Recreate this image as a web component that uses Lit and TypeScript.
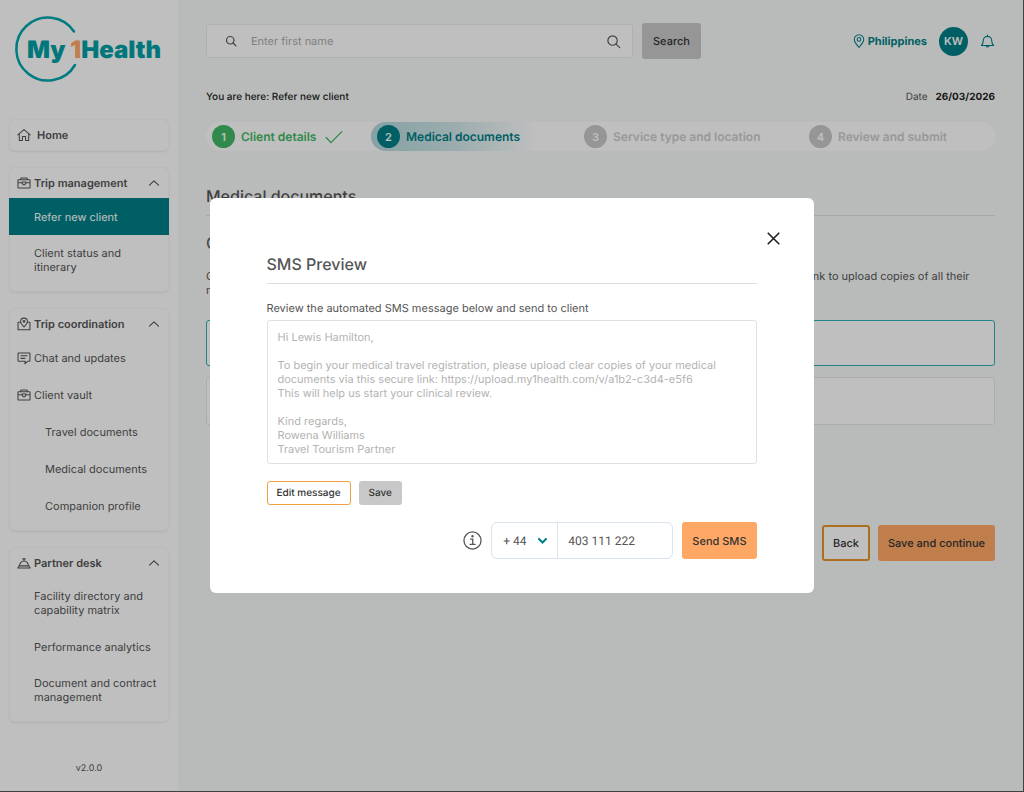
import { LitElement, html, css, svg, nothing } from "lit";
import { customElement, property, state } from "lit/decorators.js";
import { classMap } from "lit/directives/class-map.js";

const icons: Record<string, unknown> = {
  home: svg`<path d="M1 7.800 8 1.800l7 6M2.600 6.800v7.400h3.600V9.600h3.600v4.600h3.600V6.800"/>`,
  bag: svg`<path d="M4 4.200 4.600 2.300h6.800L12 4.200M1.800 4.200h12.400a.7.7 0 0 1 .7.700v8.200a.7.7 0 0 1-.7.700H1.800a.7.7 0 0 1-.7-.700V4.900a.7.7 0 0 1 .7-.700ZM1.300 7.600h4.500M10.200 7.600h4.500M5.800 6.900h4.400v1.300L9 9.900H7L5.800 8.200Z"/>`,
  map: svg`<path d="M3.800 6H1.200v8.600h13.600V6h-2.600M8 11.400C5.800 9.200 4.100 7.400 4.100 5.200a3.900 3.900 0 0 1 7.800 0c0 2.200-1.700 4-3.900 6.200Z"/><circle cx="8" cy="5" r="1"/>`,
  chat: svg`<path d="M1.800 2.200h12.400a.6.6 0 0 1 .6.6v8.200a.6.6 0 0 1-.6.600h-1.800L9 14.600l.4-3H1.800a.6.6 0 0 1-.6-.600V2.800A.6.6 0 0 1 1.800 2.200ZM4.500 5.400h7M4.500 8.400h4.500"/>`,
  bell: svg`<path d="M2.200 11.300h11.600l1.200 2.400H1ZM3 11.300a5 5.700 0 0 1 10 0M6.600 3.300h2.800M8 3.500v2"/>`,
  search: svg`<circle cx="7" cy="7" r="5"/><path d="m10.700 10.700 3.900 3.900"/>`,
  pin: svg`<path d="M8 15.200C5 11.800 2.600 9.400 2.600 6.300a5.400 5.400 0 0 1 10.800 0c0 3.100-2.400 5.500-5.400 8.900Z"/><circle cx="8" cy="6.200" r="2.100"/>`,
  alert: svg`<path d="M1.500 12.200c1.400-1.300 2-2.400 2-5.200a4.500 4.500 0 0 1 9 0c0 2.800.6 3.900 2 5.200ZM8 2.500V1.200M6.300 12.500a1.750 1.750 0 0 0 3.400 0"/>`,
  up: svg`<path d="m2 10.800 6-5.600 6 5.600"/>`,
  check: svg`<path d="m1 8.500 4.300 4.500L15 3.200"/>`,
  close: svg`<path d="m1.500 1.500 13 13M14.500 1.500l-13 13"/>`,
  info: svg`<circle cx="8" cy="8" r="7.200"/><path d="M6.300 6.800h1.900v4.400M6 11.300h4.200"/><circle cx="8" cy="4.500" r=".5" fill="currentColor"/>`,
};

const sharedStyles = css`
  *, *::before, *::after { box-sizing: border-box; }
  :host { font-family: Inter, "Liberation Sans", sans-serif; font-size: 11px; line-height: 14px; text-rendering: geometricPrecision; }
  h1, h2, h3, p, ul { margin: 0; padding: 0; font-weight: 400; list-style: none; }
  button, input, select, textarea { font: inherit; color: inherit; margin: 0; outline: none; text-rendering: inherit; }
  a { color: inherit; text-decoration: none; }
  button { cursor: pointer; }
`;

@customElement("ui-icon")
export class UiIcon extends LitElement {
  @property() name = "";
  @property({ type: Number }) size = 14;
  @property({ type: Number }) stroke = 1.2;
  static styles = css`
    :host { display: inline-flex; flex: none; }
    .icon { display: block; fill: none; stroke: currentColor; stroke-linecap: round; stroke-linejoin: round; }
  `;
  render() {
    return html`<svg class="icon" width=${this.size} height=${this.size} viewBox="0 0 16 16"
      stroke-width=${this.stroke} aria-hidden="true">${icons[this.name]}</svg>`;
  }
}

interface NavItem { label: string; icon?: string; active?: boolean; nested?: boolean; }
interface NavGroup { label: string; icon: string; items: NavItem[]; }

const groups: NavGroup[] = [
  { label: "Trip management", icon: "bag", items: [
    { label: "Refer new client", active: true },
    { label: "Client status and itinerary" },
  ] },
  { label: "Trip coordination", icon: "map", items: [
    { label: "Chat and updates", icon: "chat" },
    { label: "Client vault", icon: "bag" },
    { label: "Travel documents", nested: true },
    { label: "Medical documents", nested: true },
    { label: "Companion profile", nested: true },
  ] },
  { label: "Partner desk", icon: "bell", items: [
    { label: "Facility directory and capability matrix" },
    { label: "Performance analytics" },
    { label: "Document and contract management" },
  ] },
];

@customElement("side-nav")
export class SideNav extends LitElement {
  static styles = [sharedStyles, css`
    :host { display: flex; flex-direction: column; width: 178px; flex: none; background: #fff; color: #555; padding: 14px 9px 0; }
    .logo { display: block; width: 150px; height: 70px; margin: 0 0 35px 5px; overflow: visible; }
    .ring { fill: none; stroke: #00a5aa; stroke-width: 2.500; stroke-linecap: round; }
    .word { font-family: Inter, sans-serif; font-size: 24px; font-weight: 900; fill: #00a0a5; }
    .one { fill: #ffa866; }
    .menu { display: flex; flex-direction: column; gap: 16px; }
    .card { border: 1px solid #f8f8f8; border-radius: 6px; box-shadow: 0 1px 2px rgba(0, 0, 0, 0.08); padding-bottom: 6px; }
    .home { padding: 0; }
    .head { display: flex; align-items: center; gap: 3px; width: 100%; height: 30px; padding: 0 8px 0 7px; border: 0; background: none; text-align: left; font-weight: 600; }
    .home .head { gap: 6px; }
    .grow { flex: 1; }
    .item { display: flex; align-items: center; gap: 3px; min-height: 37px; padding: 11px 6px 11px 24px; }
    .icon { padding-left: 7px; }
    .nested { padding-left: 35px; }
    .active { background: #007f86; color: #fff; margin: 0 -1px; padding-left: 25px; }
    .version { margin: 40px 0 0; text-align: center; font-size: 9px; }
  `];
  render() {
    return html`
      <svg class="logo" viewBox="0 0 150 70" role="img" aria-label="My 1Health">
        <path class="ring" d="M60 17.500A31.500 31.500 0 1 0 61 51"/>
        <text class="word" x="13" y="44">My <tspan class="one">1</tspan>Health</text>
      </svg>
      <nav class="menu">
        <div class="card home"><a class="head" href="#"><ui-icon name="home"></ui-icon>Home</a></div>
        ${groups.map((g) => html`
          <section class="card">
            <button class="head" aria-expanded="true">
              <ui-icon name=${g.icon}></ui-icon><span class="grow">${g.label}</span>
              <ui-icon name="up" size="12" stroke="1.5"></ui-icon>
            </button>
            <ul>
              ${g.items.map((i) => html`<li><a href="#" class=${classMap({ item: true, active: !!i.active, nested: !!i.nested, icon: !!i.icon })}>
                ${i.icon ? html`<ui-icon name=${i.icon}></ui-icon>` : nothing}<span>${i.label}</span></a></li>`)}
            </ul>
          </section>`)}
      </nav>
      <p class="version">v2.0.0</p>`;
  }
}

@customElement("sms-dialog")
export class SmsDialog extends LitElement {
  static styles = [sharedStyles, css`
    :host { position: fixed; inset: 0; display: grid; place-items: center; background: rgba(0, 0, 0, 0.25); border: solid #404242; border-width: 0 1px 1px 0; color: #555; }
    .dialog { position: relative; width: 604px; max-width: 94%; padding: 55px 57px 34px; border-radius: 6px; background: #fff; }
    .close { position: absolute; top: 34px; right: 34px; display: flex; padding: 0; border: 0; background: none; color: #222; }
    .title { font-size: 16px; line-height: 22px; font-weight: 500; padding-bottom: 8px; border-bottom: 1px solid #ddd; }
    .label { display: block; margin: 17px 0 5px; }
    .message { display: block; width: 100%; height: 144px; padding: 9px 10px; border: 1px solid #e0e0e0; border-radius: 3px; resize: none; background: #fff; color: #b3b3b3; overflow: hidden; }
    .row { display: flex; gap: 8px; margin-top: 17px; }
    .small { height: 24px; padding: 0 9px; border: 1px solid transparent; border-radius: 3px; font-size: 10px; font-weight: 500; background: #c8c8c8; color: #333; }
    .outline { background: #fff; border-color: #f0a040; }
    .send { display: flex; align-items: center; justify-content: flex-end; gap: 9px; margin-top: 17px; }
    .phone { display: flex; width: 182px; height: 37px; border: 1px solid #dbe3ee; border-radius: 6px; font-family: Roboto, sans-serif; font-size: 12px; }
    .code { position: relative; display: flex; align-items: center; width: 66px; border-right: 1px solid #dbe3ee; }
    .select { appearance: none; width: 100%; height: 100%; padding: 0 0 0 11px; border: 0; background: none; }
    .chevron { position: absolute; right: 10px; fill: none; stroke: #007f86; stroke-width: 2; stroke-linecap: round; pointer-events: none; }
    .number { flex: 1; min-width: 0; padding: 0 10px; border: 0; background: none; }
    .primary { height: 37px; padding: 0 10px; border: 0; border-radius: 3px; background: #ffa866; color: #333; font-weight: 500; }
  `];
  @state() message = `Hi Lewis Hamilton,

To begin your medical travel registration, please upload clear copies of your medical
documents via this secure link: https://upload.my1health.com/v/a1b2-c3d4-e5f6
This will help us start your clinical review.

Kind regards,
Rowena Williams
Travel Tourism Partner`;
  render() {
    return html`
      <div class="dialog" role="dialog" aria-modal="true" aria-labelledby="title">
        <button class="close" aria-label="Close"><ui-icon name="close" size="13" stroke="2"></ui-icon></button>
        <h2 class="title" id="title">SMS Preview</h2>
        <label class="label" for="message">Review the automated SMS message below and send to client</label>
        <textarea class="message" id="message" readonly .value=${this.message}></textarea>
        <div class="row">
          <button class="small outline">Edit message</button>
          <button class="small">Save</button>
        </div>
        <div class="send">
          <ui-icon name="info" size="19" stroke="1.1"></ui-icon>
          <div class="phone">
            <div class="code">
              <select class="select" aria-label="Country code"><option>+ 44</option></select>
              <svg class="chevron" width="9" height="6" viewBox="0 0 9 6"><path d="m1 1 3.500 3.500L8 1"/></svg>
            </div>
            <input class="number" type="tel" aria-label="Phone number" .value=${"403 111 222"}>
          </div>
          <button class="primary">Send SMS</button>
        </div>
      </div>`;
  }
}

@customElement("app-root")
export class AppRoot extends LitElement {
  static styles = [sharedStyles, css`
    :host { display: block; }
    .shell { display: flex; min-height: 100vh; background: #f7faf9; color: #555; }
    .main { flex: 1; min-width: 0; padding: 23px 29px 0 28px; }
    .top { display: flex; align-items: center; gap: 9px; }
    .search { display: flex; align-items: center; flex: 0 1 427px; height: 34px; padding: 0 11px 0 18px; gap: 14px; background: #fff; border: 1px solid #ebebeb; border-radius: 3px; }
    .field { flex: 1; min-width: 0; border: 0; background: none; padding: 0; }
    .field::placeholder { color: #aaa; opacity: 1; }
    .button { height: 36px; padding: 0 11px; border: 0; border-radius: 3px; font-weight: 500; color: #333; background: #c8c8c8; }
    .user { display: flex; align-items: center; margin-left: auto; color: #007f86; }
    .place { display: flex; align-items: center; gap: 2px; font-weight: 700; }
    .avatar { display: grid; place-items: center; width: 29px; height: 29px; margin: 0 12px; border-radius: 50%; background: #007f86; color: #fff; font-weight: 600; }
    .crumbs { display: flex; justify-content: space-between; margin: 31px 0 18px; color: #222; font-size: 10px; font-weight: 500; }
    .date { color: #555; font-weight: 400; }
    .day { margin-left: 5px; color: #222; font-weight: 700; }
    .steps { display: grid; grid-template-columns: 165fr 207fr 225fr 192fr; height: 29px; border-radius: 15px; background: #fff; font-size: 12px; font-weight: 600; color: #ccc; }
    .step { display: flex; align-items: center; gap: 6px; padding-left: 6px; border-radius: 15px 0 0 15px; }
    .num { display: grid; place-items: center; width: 23px; height: 23px; border-radius: 50%; background: #c8c8c8; color: #fff; font-size: 11px; }
    .done { color: #42b865; }
    .done .num { background: #42b865; }
    .check { display: flex; margin-left: 3px; }
    .now { color: #007f86; background: linear-gradient(90deg, #b2d8db, #cfe6e8 40%, #fff 80%); }
    .now .num { background: #007f86; }
    .heading { margin-top: 34px; padding-bottom: 8px; border-bottom: 1px solid #e0e0e0; font-size: 16px; line-height: 22px; font-weight: 500; }
    .sub { margin: 20px 0 19px; }
    .options { display: flex; flex-direction: column; gap: 11px; margin: 23px 0 100px; }
    .option { height: 48px; border: 1px solid #e6e6e6; border-radius: 3px; background: #fff; }
    .picked { height: 46px; border-color: #2cb0b5; }
    .actions { display: flex; justify-content: flex-end; gap: 8px; }
    .back { background: #fff; border: 2px solid #e69528; padding: 0 9px; }
    .next { background: #ffa866; padding: 0 10px; }
  `];
  render() {
    return html`
      <div class="shell">
        <side-nav></side-nav>
        <main class="main">
          <header class="top">
            <div class="search">
              <ui-icon name="search" size="12" stroke="1.6"></ui-icon>
              <input class="field" type="text" placeholder="Enter first name" aria-label="First name">
              <ui-icon name="search" size="15" stroke="1.2"></ui-icon>
            </div>
            <button class="button">Search</button>
            <div class="user">
              <span class="place"><ui-icon name="pin"></ui-icon>Philippines</span>
              <span class="avatar">KW</span>
              <ui-icon name="alert" size="15"></ui-icon>
            </div>
          </header>
          <div class="crumbs">
            <span>You are here: Refer new client</span>
            <span class="date">Date <b class="day">26/03/2026</b></span>
          </div>
          <div class="steps">
            <div class="step done"><span class="num">1</span>Client details<span class="check"><ui-icon name="check" size="18"></ui-icon></span></div>
            <div class="step now"><span class="num">2</span>Medical documents</div>
            <div class="step"><span class="num">3</span>Service type and location</div>
            <div class="step"><span class="num">4</span>Review and submit</div>
          </div>
          <h1 class="heading">Medical documents</h1>
          <h2 class="sub">Collect documents</h2>
          <p>Choose how you would like to collect the documents needed in the clinical review. The client can be given a secure link to upload copies of all their medical documents.</p>
          <div class="options"><div class="option picked"></div><div class="option"></div></div>
          <div class="actions">
            <button class="button back">Back</button>
            <button class="button next">Save and continue</button>
          </div>
        </main>
      </div>
      <sms-dialog></sms-dialog>`;
  }
}
